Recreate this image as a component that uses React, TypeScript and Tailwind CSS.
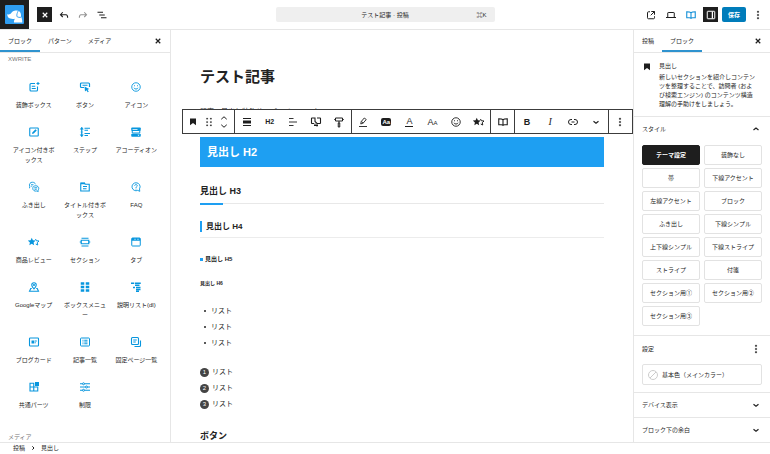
import type { ReactNode } from 'react';
import clsx from 'clsx';

const Icon = ({ children, className = 'size-3' }: { children: ReactNode; className?: string }) => (
    <svg viewBox="0 0 24 24" fill="currentColor" className={clsx('shrink-0', className)} aria-hidden="true">
        {children}
    </svg>
);

const Line = ({ children, w = 2, className }: { children: ReactNode; w?: number; className?: string }) => (
    <Icon className={className}>
        <g fill="none" stroke="currentColor" strokeWidth={w}>{children}</g>
    </Icon>
);

const Stars = () => (
    <Icon>
        <path d="M7.500 3.500l2.300 5 5.400.7-4 3.700 1.100 5.400-4.800-2.700-4.800 2.700 1.100-5.400-4-3.700 5.400-.7z" />
        <path d="M15 6l1.700 3.500 5.300.5-3.500 3.500 1 4.500-4-2" fill="none" stroke="currentColor" strokeWidth="2" />
    </Icon>
);
const Close = () => (
    <Line w={2.4}><path d="M7.500 7.500l9 9M16.500 7.500l-9 9" /></Line>
);
const More = () => (
    <Icon><path d="M10.700 4h2.600v3h-2.600zM10.700 10.500h2.600v3h-2.600zM10.700 17h2.600v3h-2.600z" stroke="currentColor" strokeWidth=".6" /></Icon>
);
const ChevronDown = () => (
    <Line w={2.4}><path d="M7 10.500l5 4 5-4" /></Line>
);
const ChevronUp = () => (
    <Line w={2.4}><path d="M7 14l5-4 5 4" /></Line>
);
const Bookmark = () => (
    <Icon><path d="M6 5v13.600l6-4.700 6 4.700V5z" /></Icon>
);
const Smile = () => (
    <Line w={1.8}>
        <circle cx="12" cy="12" r="8.500" />
        <path d="M8 13.500c1 3.500 7 3.500 8 0M9 8.500v2M15 8.500v2" />
    </Line>
);
const Book = () => (
    <Line w={2.2}><path d="M12 7.500C10 5.500 7 5.500 3.500 5.500v12H9c1.500 0 3 .7 3 2 0-1.300 1.500-2 3-2h5.500v-12c-3.500 0-6.500 0-8.500 2v12" /></Line>
);

const blocks: { name: string; icon: ReactNode }[] = [
    {
        name: '装飾ボックス',
        icon: (
            <Line w={2.2}>
                <path d="M14 5H6a2 2 0 0 0-2 2v11a2 2 0 0 0 2 2h11a2 2 0 0 0 2-2v-7M7.500 10.500h7M7.500 15h8" />
                <path d="M20 2v6M17 5h6" />
            </Line>
        ),
    },
    {
        name: 'ボタン',
        icon: (
            <Icon>
                <path d="M10 13H5a2 2 0 0 1-2-2V6a2 2 0 0 1 2-2h14a2 2 0 0 1 2 2v6M7 8.500h10" fill="none" stroke="currentColor" strokeWidth="2.400" />
                <path d="M11 11l9.500 5-3.500 1.300 2.500 4-2.200 1.200-2.300-4L12 21z" />
            </Icon>
        ),
    },
    { name: 'アイコン', icon: <Smile /> },
    {
        name: 'アイコン付きボックス',
        icon: (
            <Line w={2.2}>
                <rect x="3.500" y="4" width="17" height="16" rx="1" />
                <path d="M8 16l1-3.500 6-6 2.500 2.500-6 6z" fill="currentColor" stroke="none" />
            </Line>
        ),
    },
    {
        name: 'ステップ',
        icon: (
            <Line w={2.4}>
                <path d="M5.500 3v18M11 4.500h11M11 8.500h7M11 15h11M11 19h7" />
                <path d="M2.500 6.500l3-4 3 4zM2.500 17.500l3 4 3-4zM3 12h5" fill="currentColor" strokeWidth="1" />
            </Line>
        ),
    },
    {
        name: 'アコーディオン',
        icon: (
            <Icon>
                <rect x="2.500" y="3" width="19" height="7" rx="1.500" />
                <path d="M4.500 10v4h15v-4" fill="none" stroke="currentColor" strokeWidth="2" />
                <rect x="2.500" y="15.500" width="19" height="6" rx="1.500" />
                <path d="M5 6h10v1.500H5z" fill="#fff" />
                <path d="M15 17.500h4l-2 2.500z" fill="#fff" />
            </Icon>
        ),
    },
    {
        name: 'ふき出し',
        icon: (
            <Line w={1.8}>
                <path d="M3 14.500l.5-4A5.500 5.500 0 0 1 9 2.500c3 0 5 1.500 6 4M6 7.500h5M6.500 10.500h2" />
                <path d="M15.500 9.500c3.500 0 6 2.300 6 5.200 0 1.500-.5 2.500-1.500 3.500l.5 2.800-3-1c-4 1-8-1-8-5.200 0-3 2.500-5.300 6-5.300zM12.500 13.500h6M13 16.500h4.500" />
            </Line>
        ),
    },
    {
        name: 'タイトル付きボックス',
        icon: (
            <Line w={2.2}>
                <path d="M3.500 20V4h7.500l1.500 2.500h8V20zM8 11h8M8 15.500h7" />
                <path d="M4 5h8" strokeWidth="3" />
            </Line>
        ),
    },
    {
        name: 'FAQ',
        icon: (
            <Line w={1.8}>
                <path d="M12 3.500a8 8 0 1 0 3.500 15.200l4 2-.5-5A8 8 0 0 0 12 3.500z" />
                <path d="M9.300 9.500c.2-3.400 5.500-3 5.200.2-.2 1.700-2.500 1.800-2.500 4.300M12 15.300v1.700" />
            </Line>
        ),
    },
    { name: '商品レビュー', icon: <Stars /> },
    {
        name: 'セクション',
        icon: (
            <Line w={2.4}><path d="M5 4.500h14M5 20h14M4.500 8.500h15v7h-15zM1.500 12h3M19.500 12h3" /></Line>
        ),
    },
    {
        name: 'タブ',
        icon: (
            <Icon>
                <rect x="3.500" y="4" width="17" height="16" rx="1.500" fill="none" stroke="currentColor" strokeWidth="2" />
                <path d="M3.500 4h17v5.500h-17z" />
                <path d="M9 5.500h2v2H9zM15 5.500h2v2h-2z" fill="#fff" />
            </Icon>
        ),
    },
    {
        name: 'Googleマップ',
        icon: (
            <Line w={2.2}>
                <path d="M12 16c-3-3.500-4.500-5.500-4.500-8a4.500 4.500 0 0 1 9 0c0 2.500-1.500 4.500-4.500 8z" />
                <circle cx="12" cy="8" r="1" />
                <path d="M7.500 15H5.500L3 20.500h18L18.500 15h-2" />
            </Line>
        ),
    },
    {
        name: 'ボックスメニュー',
        icon: (
            <Icon>
                <path d="M3.500 2.500h7v5h-7zM13.500 2.500h7v5h-7zM3.500 9.500h7v5h-7zM13.500 9.500h7v5h-7zM3.500 16.500h7v5h-7zM13.500 16.500h7v5h-7z" />
            </Icon>
        ),
    },
    {
        name: '説明リスト(dl)',
        icon: (
            <Line w={2.6}><path d="M2 4.500h6M9.500 4.500h12M10 8.500h9M6 13h4M12 13h9M12 17h9M12 20.500h6" /></Line>
        ),
    },
    {
        name: 'ブログカード',
        icon: (
            <Line w={2.2}>
                <rect x="3" y="4" width="18" height="16" rx="1.500" />
                <path d="M7 9h5.500v6H7z" fill="currentColor" stroke="none" />
                <path d="M13.500 10h4M13.500 13.500h2" />
            </Line>
        ),
    },
    {
        name: '記事一覧',
        icon: (
            <Line w={2}>
                <rect x="3" y="4" width="18" height="16" rx="1.500" />
                <path d="M7 8.500h2M10.500 8.500H17M7 12h2M10.500 12H17M7 15.500h2M10.500 15.500H17" />
            </Line>
        ),
    },
    {
        name: '固定ページ一覧',
        icon: (
            <Line w={2.2}>
                <rect x="3" y="3" width="14" height="14" rx="2" />
                <path d="M6.500 8h7M6.500 12h5M21 9v10a2 2 0 0 1-2 2H9" />
            </Line>
        ),
    },
    {
        name: '共通パーツ',
        icon: (
            <Icon>
                <path d="M4 4.500h7.500v7.500H4zM4 12h7.500v8H4zM11.500 12h8v8h-8z" fill="none" stroke="currentColor" strokeWidth="2.200" />
                <path d="M14 2h8v8h-8z" />
            </Icon>
        ),
    },
    {
        name: '制限',
        icon: (
            <Line w={2}>
                <path d="M2 5.500h5M11 5.500h11M2 12h11M17 12h5M2 18.500h5M11 18.500h11" />
                <circle cx="9" cy="5.500" r="2" />
                <circle cx="15" cy="12" r="2" />
                <circle cx="9" cy="18.500" r="2" />
            </Line>
        ),
    },
];

const headingStyles = [
    'テーマ設定', '装飾なし', '帯', '下線アクセント', '左線アクセント', 'ブロック', 'ふき出し', '下線シンプル',
    '上下線シンプル', '下線ストライプ', 'ストライプ', '付箋', 'セクション用①', 'セクション用②', 'セクション用③',
];

const Tab = ({ label, active }: { label: string; active?: boolean }) => (
    <button
        type="button"
        role="tab"
        aria-selected={!!active}
        className={clsx('border-b-2 px-2 pt-0.5', active ? 'border-[#2f93cf]' : 'border-transparent')}
    >
        {label}
    </button>
);

const HeaderButton = ({ label, children, className = 'w-4' }: { label: string; children: ReactNode; className?: string }) => (
    <button type="button" aria-label={label} className={clsx('flex h-[15px] items-center justify-center', className)}>
        {children}
    </button>
);

const ToolButton = ({ label, children }: { label: string; children: ReactNode }) => (
    <button type="button" aria-label={label} className="flex min-w-0 flex-1 items-center justify-center">
        {children}
    </button>
);

const Header = () => (
    <header className="grid shrink-0 grid-cols-[1fr_219px_1fr] items-center border-b border-[#e6e6e6]">
        <div className="flex items-center">
            <a href="#" aria-label="投稿一覧" className="mr-2 flex size-[29px] items-center justify-center bg-[#1e1e1e]">
                <svg viewBox="0 0 19 19" className="size-[19px]" aria-hidden="true">
                    <rect width="19" height="19" rx="1" fill="#2f9df0" />
                    <path d="M2.300 9.300c1.500.3 3-.2 4-1.400 1-1.300 1.800-2 3.200-2.200 2-.4 3.500-.4 4.700.5 1.500 1.200 2 3.300 1.800 5.300.9 1.700 1.300 3.700 1.300 6H9c-.2-1.600.2-2.800 1-3.800-2.200.5-5.600.2-6.900-1.500-.6-.8-.9-1.900-.8-2.900z" fill="#fff" />
                    <path d="M13.200 6c-1 1.800-1.600 3.500-1.300 5.500 1.300.9 2.800 1.200 4.200.6" fill="none" stroke="#2f9df0" strokeWidth=".9" />
                </svg>
            </a>
            <HeaderButton label="ブロック挿入ツール" className="mr-1 w-[15px] bg-[#1e1e1e] text-white"><Close /></HeaderButton>
            <div className="flex gap-[3px]">
                <HeaderButton label="元に戻す">
                    <Line w={2.2}><path d="M9.500 6.500l-4.500 5 4.500 4.500M5 11.500h11c2.500 0 3.300 2 3.300 6" /></Line>
                </HeaderButton>
                <HeaderButton label="やり直す" className="w-4 text-[#949494]">
                    <Line w={2.2}><path d="M14.500 6.500l4.500 5-4.500 4.500M19 11.500H8c-2.500 0-3.300 2-3.300 6" /></Line>
                </HeaderButton>
                <HeaderButton label="リストビュー">
                    <Line w={2}><path d="M3 6.500h11M6.500 12h11M10 17.500h11" /></Line>
                </HeaderButton>
            </div>
        </div>
        <button type="button" className="grid h-[15px] grid-cols-[1fr_auto_1fr] items-center rounded-xs bg-[#efefef] px-2">
            <span className="col-start-2">テスト記事 · 投稿</span>
            <span className="text-right">⌘K</span>
        </button>
        <div className="flex items-center justify-end gap-1 pr-1">
            <HeaderButton label="投稿を表示">
                <Line w={2}><path d="M10 5.500H7a2 2 0 0 0-2 2v10a2 2 0 0 0 2 2h10a2 2 0 0 0 2-2v-3M12.500 5H19v6.500M19 5l-7.500 7.500" /></Line>
            </HeaderButton>
            <HeaderButton label="表示">
                <Line w={2}><path d="M5.500 16V8a1 1 0 0 1 1-1h11a1 1 0 0 1 1 1v8M2 17h20" /></Line>
            </HeaderButton>
            <HeaderButton label="パターン" className="w-4 text-[#1590d8]"><Book /></HeaderButton>
            <HeaderButton label="設定" className="w-[15px] bg-[#1e1e1e] text-white">
                <Icon>
                    <rect x="4.500" y="4.500" width="15" height="15" rx="1" fill="none" stroke="currentColor" strokeWidth="2" />
                    <path d="M13.500 5h2.500v14h-2.500z" />
                </Icon>
            </HeaderButton>
            <button type="button" className="h-[15px] w-6 rounded-xs bg-[#007cba] font-bold text-white">保存</button>
            <HeaderButton label="オプション"><More /></HeaderButton>
        </div>
    </header>
);

const Inserter = () => (
    <aside className="flex w-[171px] shrink-0 flex-col overflow-hidden border-r border-[#e6e6e6]">
        <div className="flex h-[23px] shrink-0 border-b border-[#e6e6e6]" role="tablist">
            <Tab label="ブロック" active />
            <Tab label="パターン" />
            <Tab label="メディア" />
            <button type="button" aria-label="閉じる" className="mr-1.5 ml-auto"><Close /></button>
        </div>
        <h2 className="mt-px px-2 text-[#757575]">XWRITE</h2>
        <ul className="mt-[9px] grid shrink-0 grid-cols-3 px-2">
            {blocks.map((block) => (
                <li key={block.name} className="flex">
                    <button type="button" className="flex flex-1 flex-col items-center px-1 pt-2 pb-2">
                        <span className="text-[#0796de]">{block.icon}</span>
                        <span className="mt-[7px] [line-break:loose]">{block.name}</span>
                    </button>
                </li>
            ))}
        </ul>
        <h2 className="mt-3.5 px-2 text-[#757575]">メディア</h2>
    </aside>
);

const Toolbar = () => (
    <div role="toolbar" aria-label="ブロックツール" className="absolute top-[79px] right-0 left-[11px] flex h-[25px] divide-x divide-[#3c3c3c] border border-[#3c3c3c] bg-white">
        <div className="flex w-[52px] shrink-0 px-0.5">
            <ToolButton label="見出し"><Bookmark /></ToolButton>
            <ToolButton label="ドラッグ">
                <Icon><path d="M7 4h2.500v2.500H7zM7 10.800h2.500v2.500H7zM7 17.500h2.500V20H7zM14.500 4H17v2.500h-2.500zM14.500 10.800H17v2.500h-2.500zM14.500 17.500H17V20h-2.500z" stroke="currentColor" strokeWidth=".4" /></Icon>
            </ToolButton>
            <ToolButton label="移動">
                <Line w={2}><path d="M6.500 6.500l5.500-5 5.500 5M6.500 17.500l5.500 5 5.500-5" /></Line>
            </ToolButton>
        </div>
        <div className="flex flex-[5]">
            <ToolButton label="配置">
                <Icon><path d="M4 4h16v2H4zM4 9h16v6H4zM4 18h16v2H4z" /></Icon>
            </ToolButton>
            <ToolButton label="レベルを変更"><span className="text-[7px] font-bold">H2</span></ToolButton>
            <ToolButton label="テキストの配置">
                <Line w={1.8}><path d="M4 5h9M4 12h16M4 19h9" /></Line>
            </ToolButton>
            <ToolButton label="レスポンシブ">
                <Line w={2.2}><path d="M8 15H4a1 1 0 0 1-1-1V5a1 1 0 0 1 1-1h6v7l4 4h6a1 1 0 0 0 1-1V5a1 1 0 0 0-1-1h-6M8 19h8M14 16v5M10 15v5" /></Line>
            </ToolButton>
            <ToolButton label="スタイルをコピー">
                <Line w={2}><path d="M5 4h14v6H5zM2.500 7H5M19 7h2.500M12 10v4M10.500 14h3v8h-3z" /></Line>
            </ToolButton>
        </div>
        <div className="flex flex-[6]">
            <ToolButton label="マーカー">
                <Line w={1.8}><path d="M7.500 16l1-5 6-7 4 3-6 7-5 2zM9 11l3.500 3M4 21h16" /></Line>
            </ToolButton>
            <ToolButton label="背景色">
                <span className="rounded-xs bg-[#1e1e1e] px-px text-[6px] leading-[8px] font-bold text-white">Aa</span>
            </ToolButton>
            <ToolButton label="文字色">
                <span className="border-b border-[#1e1e1e] px-px text-[9px] leading-[9px]">A</span>
            </ToolButton>
            <ToolButton label="文字サイズ">
                <span className="text-[9px]">A</span>
                <span className="pt-0.5 text-[6px]">A</span>
            </ToolButton>
            <ToolButton label="アイコン"><Smile /></ToolButton>
            <ToolButton label="評価"><Stars /></ToolButton>
        </div>
        <div className="flex flex-1"><ToolButton label="パターン"><Book /></ToolButton></div>
        <div className="flex flex-[4]">
            <ToolButton label="太字"><span className="text-[9px] font-bold">B</span></ToolButton>
            <ToolButton label="イタリック"><span className="font-['Liberation_Serif',serif] text-[10px] italic">I</span></ToolButton>
            <ToolButton label="リンク">
                <Line w={2}><path d="M10 7H8a5 5 0 0 0 0 10h2M14 7h2a5 5 0 0 1 0 10h-2M9 12h6" /></Line>
            </ToolButton>
            <ToolButton label="さらに表示"><ChevronDown /></ToolButton>
        </div>
        <div className="flex flex-1"><ToolButton label="オプション"><More /></ToolButton></div>
    </div>
);

const Canvas = () => (
    <main className="relative min-w-0 flex-1 overflow-hidden">
        <article className="mx-[29px] text-[#222]">
            <h1 className="pt-[37px] text-[15px] leading-5 font-bold">テスト記事</h1>
            <p className="mt-5 text-[7px] leading-[10px]">記事の見出し装飾サンプルページです</p>
            <h2 className="mt-5 bg-[#1e9ff2] px-[7px] text-[11px] leading-[30px] font-bold text-white">見出し H2</h2>
            <h3 className="mt-4 flex flex-col text-[9px] leading-4 font-bold">
                見出し H3
                <span className="mt-1 h-px bg-[#e8e8e8]">
                    <span className="block h-0.5 w-[23px] bg-[#1e9ff2]" />
                </span>
            </h3>
            <h4 className="mt-[17px] border-b border-[#ececec] pb-[5px] text-[8px] leading-[11px] font-bold">
                <span className="block border-l-2 border-[#1e9ff2] pl-1">見出し H4</span>
            </h4>
            <h5 className="mt-4 flex items-center gap-0.5 text-[6px] leading-[10px] font-bold">
                <span className="size-[3px] bg-[#1e9ff2]" />
                見出し H5
            </h5>
            <h6 className="mt-[15px] text-[5px] leading-[8px] font-bold">見出し H6</h6>
            <ul className="mt-4 text-[7px] leading-[16px]">
                {[1, 2, 3].map((n) => (
                    <li key={n} className="flex items-center gap-[5px] pl-1">
                        <span className="size-0.5 rounded-full bg-[#222]" />
                        リスト
                    </li>
                ))}
            </ul>
            <ol className="mt-[13px] text-[7px] leading-[16px]">
                {[1, 2, 3].map((n) => (
                    <li key={n} className="flex items-center gap-[3px]">
                        <span className="flex size-[9px] items-center justify-center rounded-full bg-[#444] text-[6px] text-white">{n}</span>
                        リスト
                    </li>
                ))}
            </ol>
            <h3 className="mt-4 text-[9px] leading-4 font-bold">ボタン</h3>
        </article>
        <Toolbar />
    </main>
);

const Settings = () => (
    <aside className="flex w-[137px] shrink-0 flex-col overflow-hidden border-l border-[#e6e6e6]">
        <div className="flex h-[23px] shrink-0 border-b border-[#e6e6e6]" role="tablist">
            <Tab label="投稿" />
            <Tab label="ブロック" active />
            <button type="button" aria-label="閉じる" className="mr-1.5 ml-auto"><Close /></button>
        </div>
        <section className="flex gap-1.5 border-b border-[#e6e6e6] pt-2 pr-[13px] pb-[7px] pl-[7px]">
            <Bookmark />
            <div>
                <h2>見出し</h2>
                <p className="mt-0.5 leading-[9px] [line-break:loose]">
                    新しいセクションを紹介しコンテンツを整理することで、訪問者 (および検索エンジン) のコンテンツ構造理解の手助けをしましょう。
                </p>
            </div>
        </section>
        <section className="border-b border-[#e6e6e6] px-2 pb-[9px]">
            <button type="button" aria-expanded="true" className="flex h-7 w-full items-center justify-between pb-1">
                スタイル
                <ChevronUp />
            </button>
            <div className="grid grid-cols-2 gap-x-1 gap-y-[3px]">
                {headingStyles.map((style, i) => (
                    <button
                        key={style}
                        type="button"
                        className={clsx(
                            'h-5 rounded-xs border whitespace-nowrap',
                            i === 0 ? 'border-[#1e1e1e] bg-[#1e1e1e] font-bold text-white' : 'border-[#e2e2e2]'
                        )}
                    >
                        {style}
                    </button>
                ))}
            </div>
        </section>
        <section className="border-b border-[#e6e6e6] px-2 pb-[7px]">
            <div className="flex h-7 items-center justify-between pb-0.5">
                <h2>設定</h2>
                <button type="button" aria-label="設定オプション"><More /></button>
            </div>
            <button type="button" className="flex h-[21px] w-full items-center gap-1 rounded-xs border border-[#e2e2e2] px-[5px]">
                <svg viewBox="0 0 10 10" className="size-2.5" fill="none" stroke="#ccc" strokeWidth="1" aria-hidden="true">
                    <circle cx="5" cy="5" r="4.500" />
                    <path d="M2 8l6-6" />
                </svg>
                基本色（メインカラー）
            </button>
        </section>
        {['デバイス表示', 'ブロック下の余白'].map((label) => (
            <button key={label} type="button" className="flex h-[25px] shrink-0 items-center justify-between border-b border-[#e6e6e6] px-2">
                {label}
                <ChevronDown />
            </button>
        ))}
    </aside>
);

export default function App() {
    return (
        <div
            lang="ja"
            className="flex h-screen flex-col overflow-hidden bg-white font-['Liberation_Sans','Noto_Sans_CJK_JP',sans-serif] text-[6px] leading-[10px] text-[#1e1e1e]"
        >
            <Header />
            <div className="flex min-h-0 flex-1">
                <Inserter />
                <Canvas />
                <Settings />
            </div>
            <footer className="flex shrink-0 items-center gap-1 border-t border-[#e6e6e6] px-[13px] pb-px">
                <a href="#">投稿</a>
                <Line w={3} className="size-2"><path d="M10 7l5 5-5 5" /></Line>
                <span>見出し</span>
            </footer>
        </div>
    );
}
